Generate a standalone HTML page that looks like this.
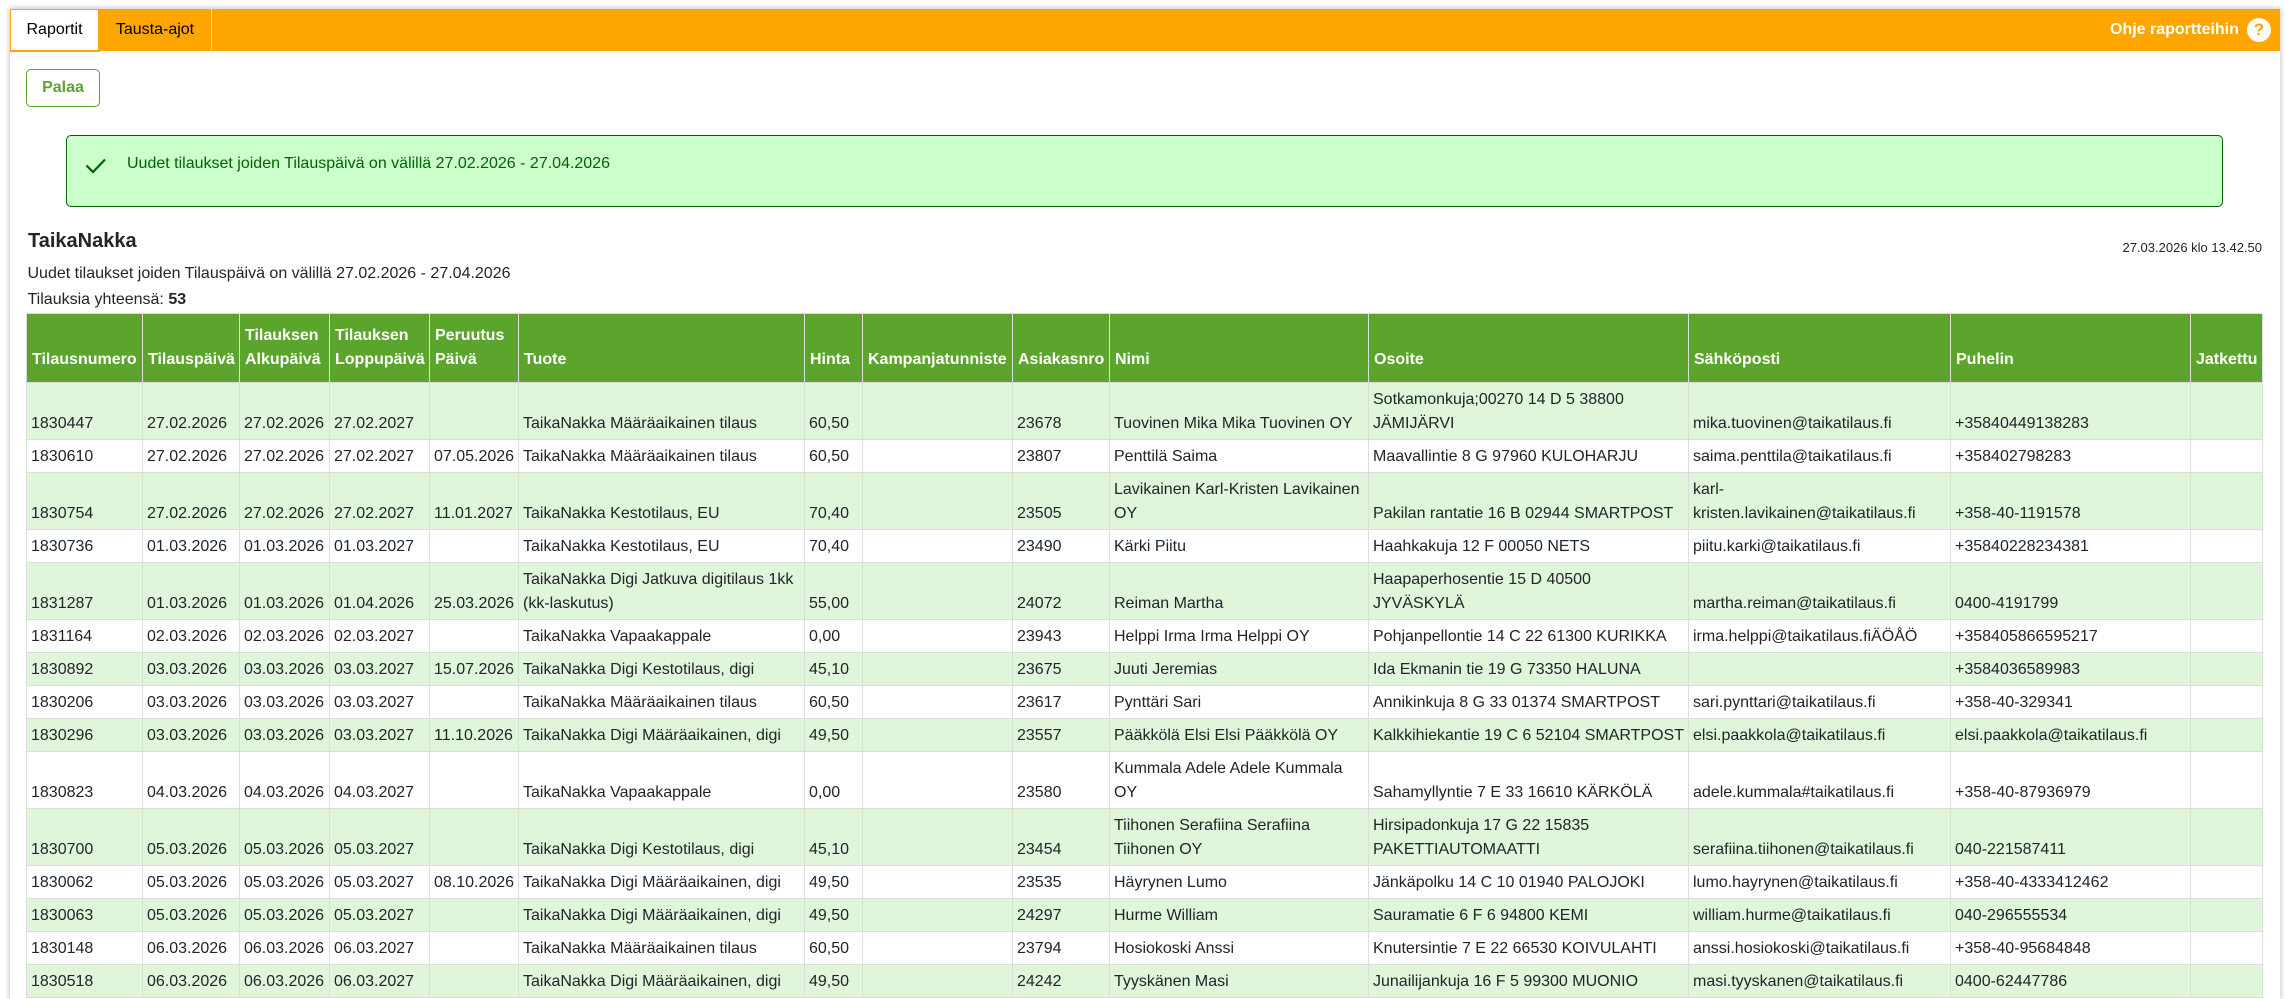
<!DOCTYPE html>
<html lang="fi">
<head>
<meta charset="utf-8">
<title>Raportit</title>
<style>
html,body{margin:0;padding:0;width:2287px;height:999px;overflow:hidden;background:#fff;font-family:"Liberation Sans",sans-serif;font-size:16px;color:#212529}
#root{position:relative;width:2287px;height:999px;overflow:hidden}
.card{position:absolute;left:10px;top:9px;width:2270px;height:990px;background:#fff;box-shadow:0 0 5px 1px rgba(0,0,0,.22)}
.bar{position:absolute;left:10px;top:9px;width:2270px;height:42px;background:#ffa500}
.tab1{position:absolute;left:10px;top:9px;width:87px;height:40px;background:#fff;border:1px solid #ffa500;border-width:1px 2px 2px 1px;line-height:40px;text-align:center;color:#000;box-sizing:content-box}
.tab2{position:absolute;left:99px;top:9px;width:112px;height:41px;border-right:1px solid #ffe0a8;line-height:41px;text-align:center;color:#000}
.help{position:absolute;left:2110px;top:18px;line-height:24px;font-weight:bold;color:#fff;white-space:nowrap}
.q{position:absolute;left:2247px;top:18px;width:24px;height:24px;border-radius:50%;background:#fff;color:#ffa500;font-weight:bold;font-size:17px;line-height:24px;text-align:center}
.btn{position:absolute;left:26px;top:69px;width:72px;height:36px;border:1px solid #5ba52c;border-radius:5px;color:#5ba52c;font-weight:bold;text-align:center;line-height:36px}
.alert{position:absolute;left:66px;top:135px;width:2155px;height:70px;box-sizing:content-box;background:#ccffcc;border:1px solid #006400;border-radius:5px}
.alert span{position:absolute;left:60px;top:16px;line-height:24px;color:#006400;white-space:nowrap}
.alert svg{position:absolute;left:18px;top:21px}
.t{position:absolute;white-space:nowrap}
table{position:absolute;left:26px;top:313px;width:2236px;border-collapse:collapse;table-layout:fixed}
th,td{border:1px solid #ddd;vertical-align:bottom;line-height:24px;text-align:left;white-space:nowrap;overflow:hidden;color:#212529}
th{background:#5ba52c;color:#fff;font-weight:bold;padding:10px 5px}
td{padding:5px 4px 3px}
tr.g td{background:#dff6da}
tr.w td{background:#fff}
</style>
</head>
<body>
<div id="root">
<div class="card"></div>
<div class="bar"></div>
<div class="tab1">Raportit</div>
<div class="tab2">Tausta-ajot</div>
<div class="help">Ohje raportteihin</div>
<div class="q">?</div>
<div class="btn">Palaa</div>
<div class="alert">
<svg width="22" height="18" viewBox="0 0 22 18"><path d="M1.5 8.5L8 15L20 2.5" fill="none" stroke="#006400" stroke-width="2.2"/></svg>
<span>Uudet tilaukset joiden Tilauspäivä on välillä 27.02.2026 - 27.04.2026</span>
</div>
<div class="t" style="left:28px;top:229px;font-size:20px;font-weight:bold;line-height:24px">TaikaNakka</div>
<div class="t" style="right:25px;top:240px;font-size:13px;line-height:16px">27.03.2026 klo 13.42.50</div>
<div class="t" style="left:27.5px;top:262px;line-height:24px">Uudet tilaukset joiden Tilauspäivä on välillä 27.02.2026 - 27.04.2026</div>
<div class="t" style="left:27.5px;top:288px;line-height:24px">Tilauksia yhteensä: <b>53</b></div>
<table>
<colgroup>
<col style="width:116px"><col style="width:97px"><col style="width:90px"><col style="width:100px"><col style="width:89px"><col style="width:286px"><col style="width:58px"><col style="width:150px"><col style="width:97px"><col style="width:259px"><col style="width:320px"><col style="width:262px"><col style="width:240px"><col style="width:72px">
</colgroup>
<thead>
<tr><th>Tilausnumero</th><th>Tilauspäivä</th><th>Tilauksen<br>Alkupäivä</th><th>Tilauksen<br>Loppupäivä</th><th>Peruutus<br>Päivä</th><th>Tuote</th><th>Hinta</th><th>Kampanjatunniste</th><th>Asiakasnro</th><th>Nimi</th><th>Osoite</th><th>Sähköposti</th><th>Puhelin</th><th>Jatkettu</th></tr>
</thead>
<tbody>
<tr class="g"><td>1830447</td><td>27.02.2026</td><td>27.02.2026</td><td>27.02.2027</td><td></td><td>TaikaNakka Määräaikainen tilaus</td><td>60,50</td><td></td><td>23678</td><td>Tuovinen Mika Mika Tuovinen OY</td><td>Sotkamonkuja;00270 14 D 5 38800<br>JÄMIJÄRVI</td><td>mika.tuovinen@taikatilaus.fi</td><td>+35840449138283</td><td></td></tr>
<tr class="w"><td>1830610</td><td>27.02.2026</td><td>27.02.2026</td><td>27.02.2027</td><td>07.05.2026</td><td>TaikaNakka Määräaikainen tilaus</td><td>60,50</td><td></td><td>23807</td><td>Penttilä Saima</td><td>Maavallintie 8 G 97960 KULOHARJU</td><td>saima.penttila@taikatilaus.fi</td><td>+358402798283</td><td></td></tr>
<tr class="g"><td>1830754</td><td>27.02.2026</td><td>27.02.2026</td><td>27.02.2027</td><td>11.01.2027</td><td>TaikaNakka Kestotilaus, EU</td><td>70,40</td><td></td><td>23505</td><td>Lavikainen Karl-Kristen Lavikainen<br>OY</td><td>Pakilan rantatie 16 B 02944 SMARTPOST</td><td>karl-<br>kristen.lavikainen@taikatilaus.fi</td><td>+358-40-1191578</td><td></td></tr>
<tr class="w"><td>1830736</td><td>01.03.2026</td><td>01.03.2026</td><td>01.03.2027</td><td></td><td>TaikaNakka Kestotilaus, EU</td><td>70,40</td><td></td><td>23490</td><td>Kärki Piitu</td><td>Haahkakuja 12 F 00050 NETS</td><td>piitu.karki@taikatilaus.fi</td><td>+35840228234381</td><td></td></tr>
<tr class="g"><td>1831287</td><td>01.03.2026</td><td>01.03.2026</td><td>01.04.2026</td><td>25.03.2026</td><td>TaikaNakka Digi Jatkuva digitilaus 1kk<br>(kk-laskutus)</td><td>55,00</td><td></td><td>24072</td><td>Reiman Martha</td><td>Haapaperhosentie 15 D 40500<br>JYVÄSKYLÄ</td><td>martha.reiman@taikatilaus.fi</td><td>0400-4191799</td><td></td></tr>
<tr class="w"><td>1831164</td><td>02.03.2026</td><td>02.03.2026</td><td>02.03.2027</td><td></td><td>TaikaNakka Vapaakappale</td><td>0,00</td><td></td><td>23943</td><td>Helppi Irma Irma Helppi OY</td><td>Pohjanpellontie 14 C 22 61300 KURIKKA</td><td>irma.helppi@taikatilaus.fiÄÖÅÖ</td><td>+358405866595217</td><td></td></tr>
<tr class="g"><td>1830892</td><td>03.03.2026</td><td>03.03.2026</td><td>03.03.2027</td><td>15.07.2026</td><td>TaikaNakka Digi Kestotilaus, digi</td><td>45,10</td><td></td><td>23675</td><td>Juuti Jeremias</td><td>Ida Ekmanin tie 19 G 73350 HALUNA</td><td></td><td>+3584036589983</td><td></td></tr>
<tr class="w"><td>1830206</td><td>03.03.2026</td><td>03.03.2026</td><td>03.03.2027</td><td></td><td>TaikaNakka Määräaikainen tilaus</td><td>60,50</td><td></td><td>23617</td><td>Pynttäri Sari</td><td>Annikinkuja 8 G 33 01374 SMARTPOST</td><td>sari.pynttari@taikatilaus.fi</td><td>+358-40-329341</td><td></td></tr>
<tr class="g"><td>1830296</td><td>03.03.2026</td><td>03.03.2026</td><td>03.03.2027</td><td>11.10.2026</td><td>TaikaNakka Digi Määräaikainen, digi</td><td>49,50</td><td></td><td>23557</td><td>Pääkkölä Elsi Elsi Pääkkölä OY</td><td>Kalkkihiekantie 19 C 6 52104 SMARTPOST</td><td>elsi.paakkola@taikatilaus.fi</td><td>elsi.paakkola@taikatilaus.fi</td><td></td></tr>
<tr class="w"><td>1830823</td><td>04.03.2026</td><td>04.03.2026</td><td>04.03.2027</td><td></td><td>TaikaNakka Vapaakappale</td><td>0,00</td><td></td><td>23580</td><td>Kummala Adele Adele Kummala<br>OY</td><td>Sahamyllyntie 7 E 33 16610 KÄRKÖLÄ</td><td>adele.kummala#taikatilaus.fi</td><td>+358-40-87936979</td><td></td></tr>
<tr class="g"><td>1830700</td><td>05.03.2026</td><td>05.03.2026</td><td>05.03.2027</td><td></td><td>TaikaNakka Digi Kestotilaus, digi</td><td>45,10</td><td></td><td>23454</td><td>Tiihonen Serafiina Serafiina<br>Tiihonen OY</td><td>Hirsipadonkuja 17 G 22 15835<br>PAKETTIAUTOMAATTI</td><td>serafiina.tiihonen@taikatilaus.fi</td><td>040-221587411</td><td></td></tr>
<tr class="w"><td>1830062</td><td>05.03.2026</td><td>05.03.2026</td><td>05.03.2027</td><td>08.10.2026</td><td>TaikaNakka Digi Määräaikainen, digi</td><td>49,50</td><td></td><td>23535</td><td>Häyrynen Lumo</td><td>Jänkäpolku 14 C 10 01940 PALOJOKI</td><td>lumo.hayrynen@taikatilaus.fi</td><td>+358-40-4333412462</td><td></td></tr>
<tr class="g"><td>1830063</td><td>05.03.2026</td><td>05.03.2026</td><td>05.03.2027</td><td></td><td>TaikaNakka Digi Määräaikainen, digi</td><td>49,50</td><td></td><td>24297</td><td>Hurme William</td><td>Sauramatie 6 F 6 94800 KEMI</td><td>william.hurme@taikatilaus.fi</td><td>040-296555534</td><td></td></tr>
<tr class="w"><td>1830148</td><td>06.03.2026</td><td>06.03.2026</td><td>06.03.2027</td><td></td><td>TaikaNakka Määräaikainen tilaus</td><td>60,50</td><td></td><td>23794</td><td>Hosiokoski Anssi</td><td>Knutersintie 7 E 22 66530 KOIVULAHTI</td><td>anssi.hosiokoski@taikatilaus.fi</td><td>+358-40-95684848</td><td></td></tr>
<tr class="g"><td>1830518</td><td>06.03.2026</td><td>06.03.2026</td><td>06.03.2027</td><td></td><td>TaikaNakka Digi Määräaikainen, digi</td><td>49,50</td><td></td><td>24242</td><td>Tyyskänen Masi</td><td>Junailijankuja 16 F 5 99300 MUONIO</td><td>masi.tyyskanen@taikatilaus.fi</td><td>0400-62447786</td><td></td></tr>
</tbody>
</table>
</div>
</body>
</html>
